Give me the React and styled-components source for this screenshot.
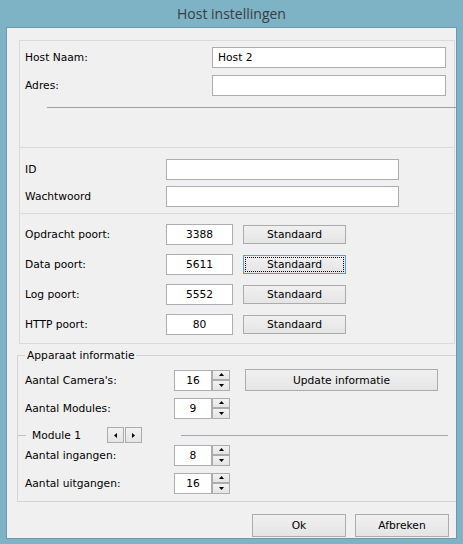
import React from 'react'
import styled, { createGlobalStyle } from 'styled-components'

const GlobalStyle = createGlobalStyle`
    html, body {
        margin: 0;
        padding: 0;
    }
    body {
        font-family: "DejaVu Sans", Tahoma, sans-serif;
        font-size: 10.7px;
        color: #000;
    }
    * {
        box-sizing: border-box;
    }
`

const Window = styled.div`
    width: 463px;
    height: 544px;
    background: #7eb2c5;
    display: flex;
    flex-direction: column;
`

const TitleBar = styled.div`
    height: 27px;
    display: flex;
    align-items: center;
    justify-content: center;
    font-family: "Open Sans", "Noto Sans", sans-serif;
    font-size: 14px;
    color: #383d42;
    padding-bottom: 1px;
`

const Client = styled.div`
    flex: 1;
    margin: 0 6px 5px 6px;
    border: 1px solid #6b9aac;
    background: #f0f0f0;
    overflow: hidden;
    display: flex;
    flex-direction: column;
`

const Panel = styled.div`
    margin: 12px 1px 0 12px;
    border: 1px solid #dadada;
    border-bottom: none;
`

const Section = styled.div`
    height: ${props => props.h}px;
    border-bottom: 1px solid #dadada;
    padding: ${props => props.top}px 0 0 5px;
`

const FieldGrid = styled.div`
    display: grid;
    grid-template-columns: ${props => props.label}px auto;
    row-gap: ${props => props.gap}px;
    align-items: center;
`

const Label = styled.span`
    white-space: nowrap;
`

const TextBox = styled.div`
    width: ${props => props.w}px;
    height: 21px;
    background: #fff;
    border: 1px solid #abadb3;
    display: flex;
    align-items: center;
    justify-content: ${props => props.center ? 'center' : 'flex-start'};
    padding-left: ${props => props.center ? 0 : 5}px;
`

const Divider = styled.div`
    margin: 11px -3px 0 22px;
    border-top: 1px solid #a0a0a0;
`

const PortCell = styled.div`
    display: flex;
    align-items: center;
`

const Button = styled.div`
    width: ${props => props.w}px;
    height: ${props => props.h}px;
    margin-left: ${props => props.ml || 0}px;
    border: 1px solid ${props => props.focused ? '#569de5' : '#acacac'};
    background: linear-gradient(#f0f0f0, #e5e5e5);
    display: flex;
    align-items: center;
    justify-content: center;
    outline: ${props => props.focused ? '1px dotted #000' : 'none'};
    outline-offset: -3px;
    white-space: nowrap;
`

const Group = styled.fieldset`
    margin: 5px -2px 0 10px;
    border: 1px solid #d5d5d5;
    padding: 7px 0 7px 7px;
    min-width: 0;
`

const Legend = styled.legend`
    padding: 0 2px;
    line-height: 13px;
`

const Row = styled.div`
    display: flex;
    align-items: center;
    height: 22px;
    margin-top: ${props => props.mt || 0}px;
`

const RowLabel = styled.span`
    width: 149px;
    white-space: nowrap;
`

const Spin = styled.div`
    display: flex;
    height: 21px;
`

const SpinValue = styled.div`
    width: 38px;
    height: 21px;
    background: #fff;
    border: 1px solid #abadb3;
    display: flex;
    align-items: center;
    justify-content: center;
`

const SpinButtons = styled.div`
    display: flex;
    flex-direction: column;
    width: 18px;
`

const SpinButton = styled.div`
    height: ${props => props.h}px;
    border: 1px solid #acacac;
    background: linear-gradient(#f2f2f2, #e4e4e4);
    display: flex;
    align-items: center;
    justify-content: center;
`

const ModuleRow = styled.div`
    display: flex;
    align-items: center;
    height: 16px;
    margin: 8px 9px 0 -7px;
`

const Segment = styled.div`
    width: 8px;
    border-top: 1px solid #c4c4c4;
`

const ModuleTitle = styled.span`
    margin-left: 6px;
    white-space: nowrap;
`

const Arrows = styled.div`
    display: flex;
    gap: 1px;
    margin-left: 26px;
`

const ArrowButton = styled.div`
    width: 17px;
    height: 16px;
    border: 1px solid #acacac;
    background: linear-gradient(#f2f2f2, #e4e4e4);
    display: flex;
    align-items: center;
    justify-content: center;
`

const ModuleLine = styled.div`
    flex: 1;
    margin-left: 39px;
    border-top: 1px solid #a8a8a8;
`

const Footer = styled.div`
    display: flex;
    justify-content: flex-end;
    gap: 9px;
    padding: 12px 7px 0 0;
`

const Triangle = ({ dir }) => {
    const pts = {
        up: '0,3 5,3 2.5,0',
        down: '0,0 5,0 2.5,3',
        left: '3,0 3,5 0,2.5',
        right: '0,0 0,5 3,2.5'
    }[dir]
    const horiz = dir === 'left' || dir === 'right'
    return (
        <svg width={horiz ? 3 : 5} height={horiz ? 5 : 3} viewBox={horiz ? '0 0 3 5' : '0 0 5 3'}>
            <polygon points={pts} fill="#000" />
        </svg>
    )
}

const Spinner = ({ value }) => (
    <Spin>
        <SpinValue>{value}</SpinValue>
        <SpinButtons>
            <SpinButton h={10}><Triangle dir="up" /></SpinButton>
            <SpinButton h={11}><Triangle dir="down" /></SpinButton>
        </SpinButtons>
    </Spin>
)

const ports = [
    { label: 'Opdracht poort:', value: '3388' },
    { label: 'Data poort:', value: '5611', focused: true },
    { label: 'Log poort:', value: '5552' },
    { label: 'HTTP poort:', value: '80' }
]

export default function App() {
    return (
        <>
            <GlobalStyle />
            <Window>
                <TitleBar>Host instellingen</TitleBar>
                <Client>
                    <Panel>
                        <Section h={107} top={6}>
                            <FieldGrid label={187} gap={7}>
                                <Label>Host Naam:</Label>
                                <TextBox w={234}>Host 2</TextBox>
                                <Label>Adres:</Label>
                                <TextBox w={234} />
                            </FieldGrid>
                            <Divider />
                        </Section>
                        <Section h={66} top={11}>
                            <FieldGrid label={141} gap={6}>
                                <Label>ID</Label>
                                <TextBox w={233} />
                                <Label>Wachtwoord</Label>
                                <TextBox w={233} />
                            </FieldGrid>
                        </Section>
                        <Section h={130} top={10}>
                            <FieldGrid label={141} gap={9}>
                                {ports.map(p => (
                                    <React.Fragment key={p.label}>
                                        <Label>{p.label}</Label>
                                        <PortCell>
                                            <TextBox w={67} center>{p.value}</TextBox>
                                            <Button w={103} h={19} ml={10} focused={p.focused}>Standaard</Button>
                                        </PortCell>
                                    </React.Fragment>
                                ))}
                            </FieldGrid>
                        </Section>
                    </Panel>
                    <Group>
                        <Legend>Apparaat informatie</Legend>
                        <Row>
                            <RowLabel>Aantal Camera's:</RowLabel>
                            <Spinner value="16" />
                            <Button w={193} h={22} ml={15}>Update informatie</Button>
                        </Row>
                        <Row mt={6}>
                            <RowLabel>Aantal Modules:</RowLabel>
                            <Spinner value="9" />
                        </Row>
                        <ModuleRow>
                            <Segment />
                            <ModuleTitle>Module 1</ModuleTitle>
                            <Arrows>
                                <ArrowButton><Triangle dir="left" /></ArrowButton>
                                <ArrowButton><Triangle dir="right" /></ArrowButton>
                            </Arrows>
                            <ModuleLine />
                        </ModuleRow>
                        <Row mt={1}>
                            <RowLabel>Aantal ingangen:</RowLabel>
                            <Spinner value="8" />
                        </Row>
                        <Row mt={6}>
                            <RowLabel>Aantal uitgangen:</RowLabel>
                            <Spinner value="16" />
                        </Row>
                    </Group>
                    <Footer>
                        <Button w={94} h={23}>Ok</Button>
                        <Button w={94} h={23}>Afbreken</Button>
                    </Footer>
                </Client>
            </Window>
        </>
    )
}
